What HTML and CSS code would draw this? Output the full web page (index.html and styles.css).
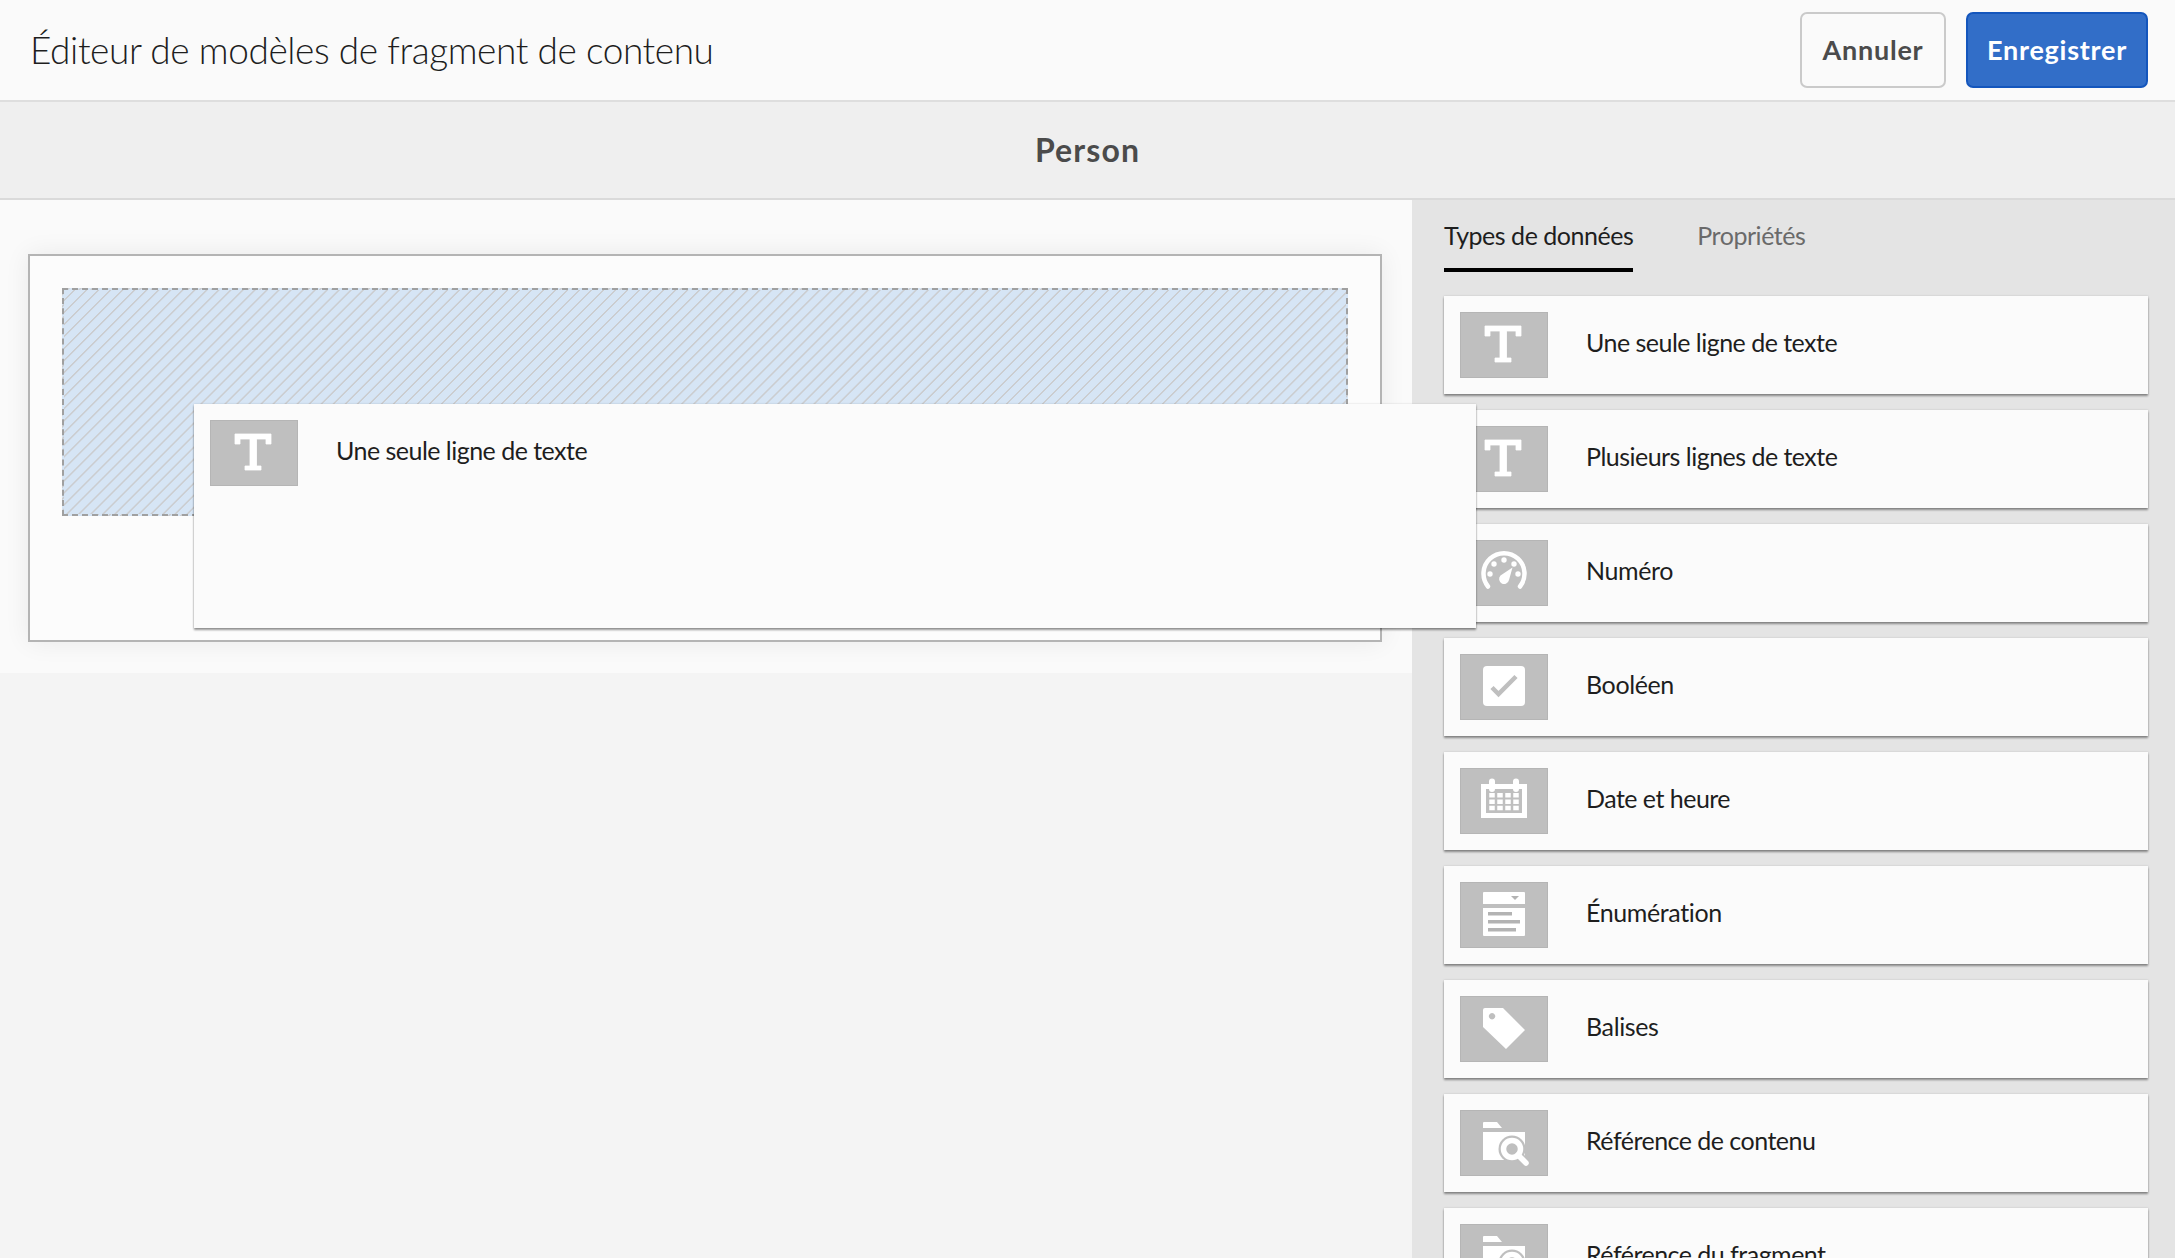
FILE: index.html
```html
<!DOCTYPE html>
<html lang="fr">
<head>
<meta charset="utf-8">
<title>Éditeur de modèles de fragment de contenu</title>
<link rel="stylesheet" href="styles.css">
</head>
<body>
<svg width="0" height="0" class="defs">
  <symbol id="i-text" viewBox="0 0 88 66"><path d="M25 14h36v10h-5v-5H46.500v27H51v4H35v-4h5V19H30v5h-5z" stroke="#fff" stroke-width=".8"/></symbol>
  <symbol id="i-gauge" viewBox="0 0 88 66"><path d="M28 46.500A20.500 20.500 0 1 1 60 46.500" fill="none" stroke="#fff" stroke-width="4.500" stroke-linecap="round"/><circle cx="30" cy="34" r="2.700"/><circle cx="34" cy="24" r="2.700"/><circle cx="44" cy="20" r="2.700"/><circle cx="54" cy="24" r="2.700"/><circle cx="58" cy="34" r="2.700"/><path d="M52.500 27.500 49 40a5 5 0 1 1-8.500-4.500z"/></symbol>
  <symbol id="i-check" viewBox="0 0 88 66"><rect x="23" y="12" width="42" height="40" rx="4"/><path d="m32 33.500 6.500 6.500L56 22.500" fill="none" stroke="#bfbfbf" stroke-width="4.500"/></symbol>
  <symbol id="i-calendar" viewBox="0 0 88 66"><path fill-rule="evenodd" d="M21 16h8v-2.500a2.500 2.500 0 0 1 6 0V16h18v-2.500a2.500 2.500 0 0 1 6 0V16h8v34H21zM26 21v24h36V21h-3a3 3 0 0 1-6 0H35a3 3 0 0 1-6 0z"/><path d="M31 25v18M39 25v18M47 25v18M55 25v18" transform="translate(1 0)" fill="none" stroke="#fff" stroke-width="5.500" stroke-dasharray="4.500 1.900"/></symbol>
  <symbol id="i-list" viewBox="0 0 88 66"><path d="M24 10h40a1 1 0 0 1 1 1v11H23V11a1 1 0 0 1 1-1zM23 26h42v27a1 1 0 0 1-1 1H24a1 1 0 0 1-1-1z"/><path fill="#b3b3b3" d="M51 14h8l-4 4zM28 30h24v3.500H28zM28 38h32v3.500H28zM28 46h28v3.500H28z"/></symbol>
  <symbol id="i-tag" viewBox="0 0 88 66"><path fill-rule="evenodd" d="M25 12h18l22 22-19 19L23 31V14a2 2 0 0 1 2-2zM32 17a3.200 3.200 0 1 0 .1 0z"/></symbol>
  <symbol id="i-folder" viewBox="0 0 88 66"><path d="M24 12h13l5 6H23v-5a1 1 0 0 1 1-1zM23 22h42v28H23z"/><circle cx="52" cy="39" r="13.500" fill="#bfbfbf"/><path d="M58 45l9 9" stroke="#bfbfbf" stroke-width="9" fill="none"/><circle cx="52" cy="39" r="8.500" fill="none" stroke="#fff" stroke-width="5.500"/><path d="M58 45l8 8" stroke="#fff" stroke-width="5.500" stroke-linecap="round"/></symbol>
</svg>
<header class="header">
  <h1 class="title">Éditeur de modèles de fragment de contenu</h1>
  <div class="actions">
    <button class="btn cancel"><span>Annuler</span></button>
    <button class="btn save"><span>Enregistrer</span></button>
  </div>
</header>
<div class="model-bar"><h2 class="model-name">Person</h2></div>
<main class="workspace">
  <section class="canvas">
    <div class="sheet"><div class="form"><div class="dropzone">
      <div class="item dragged"><svg class="thumb"><use href="#i-text"/></svg><span class="label">Une seule ligne de texte</span></div>
    </div></div></div>
  </section>
  <aside class="rail">
    <nav class="tabs"><a class="tab active">Types de données</a><a class="tab props">Propriétés</a></nav>
    <div class="items">
      <div class="item"><svg class="thumb"><use href="#i-text"/></svg><span class="label">Une seule ligne de texte</span></div>
      <div class="item"><svg class="thumb"><use href="#i-text"/></svg><span class="label">Plusieurs lignes de texte</span></div>
      <div class="item"><svg class="thumb"><use href="#i-gauge"/></svg><span class="label wide">Numéro</span></div>
      <div class="item"><svg class="thumb"><use href="#i-check"/></svg><span class="label wide">Booléen</span></div>
      <div class="item"><svg class="thumb"><use href="#i-calendar"/></svg><span class="label">Date et heure</span></div>
      <div class="item"><svg class="thumb"><use href="#i-list"/></svg><span class="label wide">Énumération</span></div>
      <div class="item"><svg class="thumb"><use href="#i-tag"/></svg><span class="label wide">Balises</span></div>
      <div class="item"><svg class="thumb"><use href="#i-folder"/></svg><span class="label">Référence de contenu</span></div>
      <div class="item"><svg class="thumb"><use href="#i-folder"/></svg><span class="label">Référence du fragment</span></div>
    </div>
  </aside>
</main>
</body>
</html>
```
FILE: styles.css
```css
* { box-sizing: border-box; }
body { margin: 0; height: 1258px; overflow: hidden; display: flex; flex-direction: column; background: #f4f4f4; color: #1e1e1e; font-family: Lato, "Noto Sans", sans-serif; }
.defs { position: absolute; }
.header { flex: none; height: 102px; padding: 0 27px 0 30px; display: flex; align-items: center; justify-content: space-between; background: #fafafa; border-bottom: 2px solid #dedede; }
.title { margin: 0; font-size: 37px; font-weight: 300; line-height: 48px; letter-spacing: -.42px; white-space: nowrap; }
.actions { display: flex; gap: 20px; }
.btn { height: 76px; padding: 0; border-radius: 7px; font: 700 27px/36px Lato, sans-serif; letter-spacing: .75px; white-space: nowrap; }
.cancel { width: 146px; background: #fafafa; border: 2px solid #cacaca; color: #4b4b4b; }
.save { width: 182px; background: #326ec8; border: 2px solid #1456bd; color: #fff; }
.model-bar { flex: none; height: 98px; display: flex; align-items: center; justify-content: center; background: #efefef; border-bottom: 2px solid #dadada; }
.model-name { margin: 0; font-size: 32px; line-height: 40px; font-weight: 700; letter-spacing: 1.1px; color: #4b4b4b; }
.workspace { flex: 1; min-height: 0; display: flex; }
.canvas { flex: 1; }
.sheet { height: 473px; padding: 54px 30px 31px 28px; background: #fafafa; }
.form { height: 388px; padding: 32px; border: 2px solid #b4b4b4; background: #fcfcfc; box-shadow: 0 0 24px rgba(0,0,0,.07); }
.dropzone { position: relative; height: 228px; border: 2px dashed #a0a0a0; background: repeating-linear-gradient(135deg, #d6e5f5 0 6.500px, #cbcdd0 7px 8px, #d6e5f5 8.500px); }
.rail { width: 763px; padding: 0 27px 0 32px; background: #e4e4e4; }
.tabs { height: 72px; margin-bottom: 24px; display: flex; gap: 64px; font-size: 25px; line-height: 36px; letter-spacing: -.47px; }
.tab { padding-top: 17px; border-bottom: 4px solid transparent; white-space: nowrap; }
.active { border-color: #000; }
.props { color: #6a6a6a; }
.items { display: flex; flex-direction: column; gap: 16px; }
.item { flex: none; height: 98px; padding: 16px; display: flex; align-items: flex-start; background: #fbfbfb; box-shadow: 0 2px 2px rgba(0,0,0,.4), 0 0 2px rgba(0,0,0,.15); }
.dragged { position: absolute; left: 130px; top: 114px; width: 1282px; height: 224px; z-index: 2; }
.thumb { flex: none; width: 88px; height: 66px; background: #bfbfbf; box-shadow: inset 0 0 0 1px #b5b5b5; fill: #fff; }
.label { margin: 12px 0 0 38px; font-size: 25px; line-height: 36px; letter-spacing: -.52px; white-space: nowrap; }
.wide { letter-spacing: -.38px; }
```
